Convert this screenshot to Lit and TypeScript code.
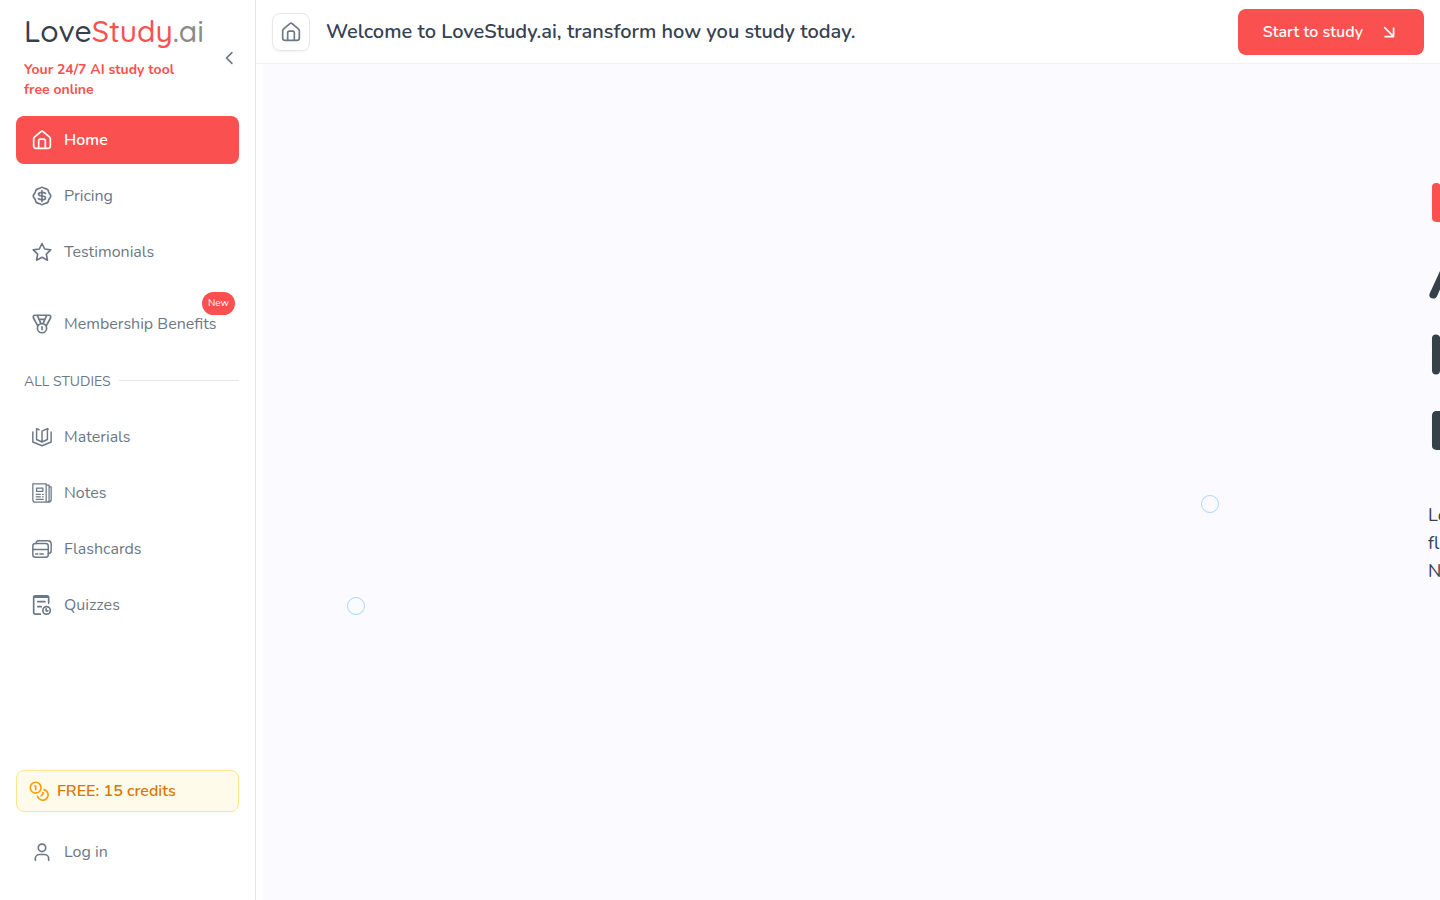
import { LitElement, html, css, svg } from "lit";
import { customElement } from "lit/decorators.js";

const stroke = (body: unknown, size = 20, width = 2) => html`<svg
  width=${size}
  height=${size}
  viewBox="0 0 24 24"
  fill="none"
  stroke="currentColor"
  stroke-width=${width}
  stroke-linecap="round"
  stroke-linejoin="round"
  aria-hidden="true"
>${body}</svg>`;

const home = svg`<path d="M8 22v-9a2 2 0 0 1 2-2h4a2 2 0 0 1 2 2v9M2 10.600c0-1 .4-1.700 1.200-2.400l7.500-6.300c.8-.7 1.800-.7 2.600 0l7.500 6.300c.8.7 1.200 1.400 1.200 2.400v8.200c0 2.200-.9 3.200-3.100 3.200H5.100C2.900 22 2 21 2 18.800z"/>`;
const pricing = svg`<path d="M12 1.500c1.500 0 2 1.200 3.500 1.500s2.800.3 3.700 1.800.2 2.300 1.300 3.600S22.500 10.500 22.500 12s-.9 2.300-2 3.600-.4 2.100-1.300 3.600-2.200 1.500-3.700 1.800S13.500 22.500 12 22.500s-2-1.200-3.500-1.500-2.800-.3-3.700-1.800-.2-2.300-1.300-3.600S1.500 13.500 1.500 12s.9-2.300 2-3.600.4-2.100 1.300-3.600S7 3.300 8.500 3 10.500 1.500 12 1.500z"/><path d="M12 5.500v13M16.200 8.800c-.8-.8-2-1.200-4.200-1.200-2.600 0-4.200.6-4.200 2.100S9.200 12 12 12s4.200.8 4.200 2.300-1.600 2.100-4.200 2.100c-2 0-3.500-.4-4.400-1.200"/>`;
const star = svg`<path d="M12 1.800l3.200 6.600 7.300 1-5.300 5.100 1.300 7.300L12 18.300l-6.500 3.500 1.300-7.300-5.300-5.100 7.300-1z"/>`;
const medal = svg`<circle cx="12" cy="17" r="5.500"/><path d="M12 15.500v3M6.700 14 1.800 4.800c-.8-1.600 0-3.300 1.700-3.300h17c1.700 0 2.500 1.700 1.700 3.300L17.300 14M6.500 2l4 9M17.500 2l-4 9M8.500 6.500h7"/>`;
const materials = svg`<path d="M1 6v12l11 4.500L23 18V6M12 6.500V18M12 18l-6.500-3V2M5.500 2l3 1.300M12 18l6.500-3V2L12 5v2M18.500 2l1 .5"/>`;
const notes = svg`<path d="M1 1h16v22H4a3 3 0 0 1-3-3zM17 2.500h3.500V21c0 1.200-1 2-3.500 2M20.500 4.500H23V20c0 2-1.200 3-4 3M5.500 6h7.500v4H5.500zM5 13.500h5M12.500 13.500h1M5 16.500h5M12.500 16.500h1M5 19.500h8.500"/>`;
const cards = svg`<rect x="1" y="5.500" width="18.500" height="16.500" rx="3"/><path d="M1 12.500h18.500M4.500 18h2.500M9.500 18h4M5 5.500c0-2.500 1-3.500 3-3.500h11c2.500 0 4 1.300 4 4v8c0 2-1 3.200-3.500 3.500"/>`;
const quiz = svg`<path d="M20 10V3c0-1.200-.8-2-2-2H4C2.800 1 2 1.800 2 3v17.500C2 22 3 23 4.500 23H10M2.500 2.500h17M7 8h8.500M7 14h4"/><circle cx="17.500" cy="18.500" r="4.500"/><path d="M17 16.500v2.500h2"/>`;
const coins = svg`<circle cx="8" cy="8" r="6.500"/><path d="M7 6h1v4.500M18.200 10.300a6.500 6.500 0 1 1-8 8.200M16.700 14l.7.700-2.900 3"/>`;
const user = svg`<circle cx="12" cy="7" r="4.500"/><path d="M4 22v-2a5 5 0 0 1 5-5h6a5 5 0 0 1 5 5v2"/>`;
const arrow = svg`<path stroke-linecap="square" d="M7 7l10 10M17.500 7.500v10H7.500"/>`;
const chevron = svg`<path d="M15.500 5.500 9 12l6.500 6.500"/>`;

@customElement("app-root")
export class AppRoot extends LitElement {
  static styles = css`
    :host {
      display: flex;
      height: 100vh;
      overflow: hidden;
      background: #fff;
      color: #364152;
      font-family: Nunito, "Nunito Sans", Lato, sans-serif;
      font-size: 16px;
      line-height: 24px;
    }
    * { box-sizing: border-box; }
    svg { display: block; flex: none; }
    h1, h2, p, ul { margin: 0; padding: 0; }
    ul { list-style: none; }
    a { color: inherit; text-decoration: none; }
    button { font: inherit; color: inherit; border: 0; background: none; cursor: pointer; padding: 0; }
    .side {
      width: 256px;
      flex: none;
      display: flex;
      flex-direction: column;
      padding: 12px 16px 24px;
      border-right: 1px solid #e2e5e9;
      color: #6c7885;
    }
    .brand { display: flex; align-items: center; justify-content: space-between; padding-left: 8px; height: 92px; margin-bottom: 12px; }
    .name { padding-bottom: 4px; }
    .logo { display: block; font-family: Quicksand, Comfortaa, Nunito, Lato, sans-serif; font-size: 30px; line-height: 38px; font-weight: 500; color: #364049; margin-bottom: 10px; white-space: nowrap; }
    .logo .red { color: #fb5050; }
    .logo .dim { color: #8a8b85; }
    .tag { width: 164px; font-size: 14px; line-height: 20px; font-weight: 700; color: #fb5050; }
    .nav { display: flex; flex-direction: column; gap: 8px; }
    .item { position: relative; display: flex; align-items: center; gap: 12px; height: 48px; padding: 0 16px; border-radius: 8px; white-space: nowrap; }
    .item.on { background: #fb5050; color: #fff; font-weight: 600; }
    .late { padding-top: 16px; }
    .badge { position: absolute; top: -8px; right: 4px; padding: 0 6px; font-size: 10px; line-height: 23px; border-radius: 12px; background: #fb5050; color: #fff; }
    .group { display: flex; align-items: center; gap: 8px; font-size: 14px; line-height: 20px; font-weight: 400; margin: 24px 0 21px; padding-left: 8px; white-space: nowrap; }
    .group::after { content: ""; flex: 1; margin-bottom: 4px; border-top: 1px solid #e2e5e9; }
    .foot { margin-top: auto; display: flex; flex-direction: column; gap: 16px; }
    .credits { display: flex; align-items: center; gap: 8px; height: 42px; padding: 0 12px; border: 1px solid #fde68a; border-radius: 8px; background: #fffbeb; color: #d97706; font-weight: 600; }
    .credits svg { color: #f59e0b; }
    .main { flex: 1; min-width: 0; display: flex; flex-direction: column; }
    .top { display: flex; align-items: center; justify-content: space-between; height: 64px; padding: 0 16px; border-bottom: 1px solid #f0f1f3; }
    .title { display: flex; align-items: center; gap: 16px; }
    .title h1 { font-size: 20px; line-height: 28px; font-weight: 600; }
    .square { display: grid; place-items: center; width: 38px; height: 38px; border: 1px solid #e5e7eb; border-radius: 8px; box-shadow: 0 1px 2px #0000000d; color: #6c7885; }
    .start { display: flex; align-items: center; gap: 16px; height: 46px; padding: 0 25px; border-radius: 8px; background: #fb5050; color: #fff; font-weight: 600; }
    .stage { position: relative; flex: 1; margin-left: 7px; overflow: hidden; background: #fbfaff; display: flex; }
    .hero { flex: none; margin-left: calc(100% - 12px); padding-top: 102px; white-space: nowrap; }
    .hero h2 { font-size: 56px; line-height: 76px; font-weight: 800; color: #364049; margin-bottom: 31px; }
    .hero h2 span { display: block; }
    .hero .red { color: #fb5050; }
    .hero p { font-size: 18px; line-height: 28px; }
    .ring { position: absolute; width: 18px; height: 18px; border: 1px solid #a5d8f8; border-radius: 50%; }
    .r1 { left: 84px; top: 533px; }
    .r2 { left: 938px; top: 431px; }
  `;

  item(label: string, icon: unknown, width = 2, on = false, badge = "") {
    return html`<li class=${badge ? "late" : ""}>
      <a class="item ${on ? "on" : ""}" href="#">${stroke(icon, 20, width)}<span>${label}</span>${badge ? html`<span class="badge">${badge}</span>` : ""}</a>
    </li>`;
  }

  render() {
    return html`
      <aside class="side">
        <div class="brand">
          <div class="name">
            <a class="logo" href="#">Love<span class="red">Study</span><span class="dim">.ai</span></a>
            <p class="tag">Your 24/7 AI study tool free online</p>
          </div>
          <button aria-label="Collapse sidebar">${stroke(chevron)}</button>
        </div>
        <nav>
          <ul class="nav">
            ${this.item("Home", home, 2, true)}
            ${this.item("Pricing", pricing)}
            ${this.item("Testimonials", star)}
            ${this.item("Membership Benefits", medal, 2, false, "New")}
          </ul>
          <h2 class="group">ALL STUDIES</h2>
          <ul class="nav">
            ${this.item("Materials", materials, 1.75)}
            ${this.item("Notes", notes, 1.5)}
            ${this.item("Flashcards", cards, 1.75)}
            ${this.item("Quizzes", quiz)}
          </ul>
        </nav>
        <div class="foot">
          <a class="credits" href="#">${stroke(coins)}<span>FREE: 15 credits</span></a>
          <a class="item" href="#">${stroke(user)}<span>Log in</span></a>
        </div>
      </aside>
      <div class="main">
        <header class="top">
          <div class="title">
            <a class="square" href="#" aria-label="Home">${stroke(home)}</a>
            <h1>Welcome to LoveStudy.ai, transform how you study today.</h1>
          </div>
          <button class="start">Start to study ${stroke(arrow)}</button>
        </header>
        <main class="stage">
          <i class="ring r1"></i>
          <i class="ring r2"></i>
          <section class="hero">
            <h2><span class="red">L</span><span>A</span><span>N</span><span>E</span></h2>
            <p>Lo<br />fl<br />N</p>
          </section>
        </main>
      </div>
    `;
  }
}
